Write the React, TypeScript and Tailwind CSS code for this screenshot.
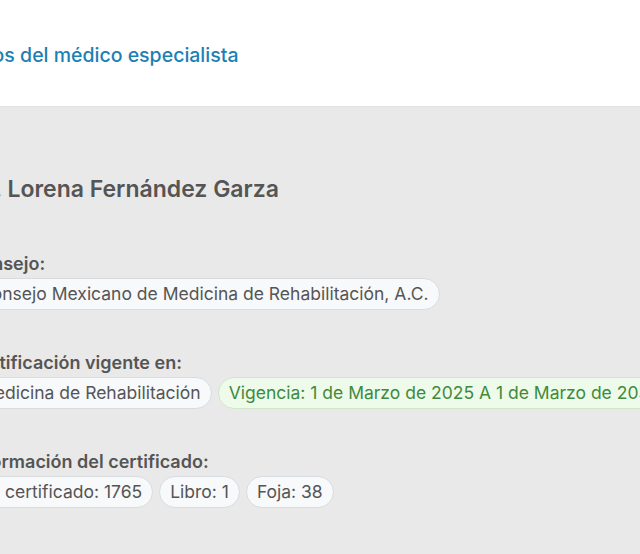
const font = { fontFamily: "Inter, 'Noto Sans', sans-serif" };

function Pill({ children, tone = "plain" }: { children: React.ReactNode; tone?: "plain" | "green" }) {
  const cls =
    tone === "green"
      ? "border-[#cfe6c9] bg-[#eefbea] text-[#3f8a3c]"
      : "border-[#d9dcdf] bg-[#f7f9fb] text-[#555555]";
  return (
    <span className={`inline-flex h-8 items-center whitespace-nowrap rounded-full border px-[10px] text-[17.5px] ${cls}`}>
      {children}
    </span>
  );
}

function Section({ label, children }: { label: string; children: React.ReactNode }) {
  return (
    <div>
      <p className="text-lg font-semibold leading-6 text-[#555555]">{label}</p>
      <div className="mt-0.5 flex gap-1.5">{children}</div>
    </div>
  );
}

export default function App() {
  return (
    <div className="h-[554px] w-[640px] overflow-hidden bg-[#e9e9e9]" style={font}>
      <header className="flex h-[107px] items-center border-b border-[#e2e2e2] bg-white pt-[5px]">
        <h2 className="-ml-[39px] text-[19.5px] font-medium text-[#1d7fb4]">Datos del médico especialista</h2>
      </header>
      <main className="-ml-[32px] pt-[68px]">
        <h1 className="-ml-3 text-[23px] font-semibold leading-7 text-[#555555]">Dra. Lorena Fernández Garza</h1>
        <div className="mt-[49px] flex flex-col gap-[41px]">
          <Section label="Consejo:">
            <Pill>Consejo Mexicano de Medicina de Rehabilitación, A.C.</Pill>
          </Section>
          <Section label="Certificación vigente en:">
            <Pill>Medicina de Rehabilitación</Pill>
            <Pill tone="green">Vigencia: 1 de Marzo de 2025 A 1 de Marzo de 2030</Pill>
          </Section>
          <Section label="Información del certificado:">
            <Pill>Nº certificado: 1765</Pill>
            <Pill>Libro: 1</Pill>
            <Pill>Foja: 38</Pill>
          </Section>
        </div>
      </main>
    </div>
  );
}
